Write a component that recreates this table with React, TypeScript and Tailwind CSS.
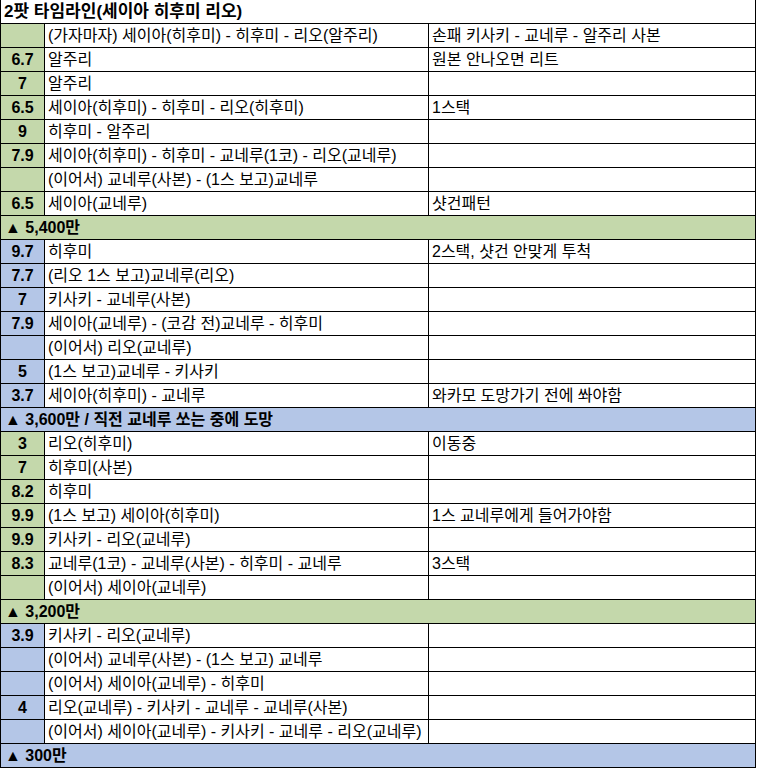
import React from "react";

type Row =
  | { kind: "title"; text: string }
  | { kind: "head"; text: string; color: "g" | "b" }
  | { kind: "data"; n: string; a: string; b: string; color: "g" | "b" };

const G = "bg-[#c4d8ab]";
const B = "bg-[#b4c6e7]";

const rows: Row[] = [
  { kind: "title", text: "2팟 타임라인(세이아 히후미 리오)" },
  { kind: "data", color: "g", n: "", a: "(가자마자) 세이아(히후미) - 히후미 - 리오(알주리)", b: "손패 키사키 - 교네루 - 알주리 사본" },
  { kind: "data", color: "g", n: "6.7", a: "알주리", b: "원본 안나오면 리트" },
  { kind: "data", color: "g", n: "7", a: "알주리", b: "" },
  { kind: "data", color: "g", n: "6.5", a: "세이아(히후미) - 히후미 - 리오(히후미)", b: "1스택" },
  { kind: "data", color: "g", n: "9", a: "히후미 - 알주리", b: "" },
  { kind: "data", color: "g", n: "7.9", a: "세이아(히후미) - 히후미 - 교네루(1코) - 리오(교네루)", b: "" },
  { kind: "data", color: "g", n: "", a: "(이어서) 교네루(사본) - (1스 보고)교네루", b: "" },
  { kind: "data", color: "g", n: "6.5", a: "세이아(교네루)", b: "샷건패턴" },
  { kind: "head", color: "g", text: "▲ 5,400만" },
  { kind: "data", color: "b", n: "9.7", a: "히후미", b: "2스택, 샷건 안맞게 투척" },
  { kind: "data", color: "b", n: "7.7", a: "(리오 1스 보고)교네루(리오)", b: "" },
  { kind: "data", color: "b", n: "7", a: "키사키 - 교네루(사본)", b: "" },
  { kind: "data", color: "b", n: "7.9", a: "세이아(교네루) - (코감 전)교네루 - 히후미", b: "" },
  { kind: "data", color: "b", n: "", a: "(이어서) 리오(교네루)", b: "" },
  { kind: "data", color: "b", n: "5", a: "(1스 보고)교네루 - 키사키", b: "" },
  { kind: "data", color: "b", n: "3.7", a: "세이아(히후미) - 교네루", b: "와카모 도망가기 전에 쏴야함" },
  { kind: "head", color: "b", text: "▲ 3,600만 / 직전 교네루 쏘는 중에 도망" },
  { kind: "data", color: "g", n: "3", a: "리오(히후미)", b: "이동중" },
  { kind: "data", color: "g", n: "7", a: "히후미(사본)", b: "" },
  { kind: "data", color: "g", n: "8.2", a: "히후미", b: "" },
  { kind: "data", color: "g", n: "9.9", a: "(1스 보고) 세이아(히후미)", b: "1스 교네루에게 들어가야함" },
  { kind: "data", color: "g", n: "9.9", a: "키사키 - 리오(교네루)", b: "" },
  { kind: "data", color: "g", n: "8.3", a: "교네루(1코) - 교네루(사본) - 히후미 - 교네루", b: "3스택" },
  { kind: "data", color: "g", n: "", a: "(이어서) 세이아(교네루)", b: "" },
  { kind: "head", color: "g", text: "▲ 3,200만" },
  { kind: "data", color: "b", n: "3.9", a: "키사키 - 리오(교네루)", b: "" },
  { kind: "data", color: "b", n: "", a: "(이어서) 교네루(사본) - (1스 보고) 교네루", b: "" },
  { kind: "data", color: "b", n: "", a: "(이어서) 세이아(교네루) - 히후미", b: "" },
  { kind: "data", color: "b", n: "4", a: "리오(교네루) - 키사키 - 교네루 - 교네루(사본)", b: "" },
  { kind: "data", color: "b", n: "", a: "(이어서) 세이아(교네루) - 키사키 - 교네루 - 리오(교네루)", b: "" },
  { kind: "head", color: "b", text: "▲ 300만" },
];

export default function App() {
  return (
    <div
      className="bg-white w-[757px] h-[769px] overflow-hidden text-black"
      style={{ fontFamily: '"Liberation Sans", "Noto Sans CJK KR", sans-serif' }}
    >
      <div className="w-[756px] border-l border-black">
        {rows.map((r, i) => {
          if (r.kind === "title") {
            return (
              <div key={i} className="flex h-[24px] items-center overflow-hidden whitespace-nowrap border-b border-r border-black bg-white pl-[3px] text-[17px] font-bold">
                {r.text}
              </div>
            );
          }
          if (r.kind === "head") {
            return (
              <div key={i} className={`flex h-[24px] items-center overflow-hidden whitespace-nowrap border-b border-r border-black pl-[4px] text-[16px] font-bold ${r.color === "g" ? G : B}`}>
                {r.text}
              </div>
            );
          }
          return (
            <div key={i} className="flex h-[24px] border-b border-black text-[16px]">
              <div className={`flex w-[44px] shrink-0 items-center justify-center border-r border-black font-bold text-[16px] ${r.color === "g" ? G : B}`}>
                {r.n}
              </div>
              <div className="flex w-[384px] shrink-0 items-center overflow-hidden whitespace-nowrap border-r border-black bg-white pl-[3px]">
                {r.a}
              </div>
              <div className="flex flex-1 items-center overflow-hidden whitespace-nowrap border-r border-black bg-white pl-[3px]">
                {r.b}
              </div>
            </div>
          );
        })}
      </div>
    </div>
  );
}
